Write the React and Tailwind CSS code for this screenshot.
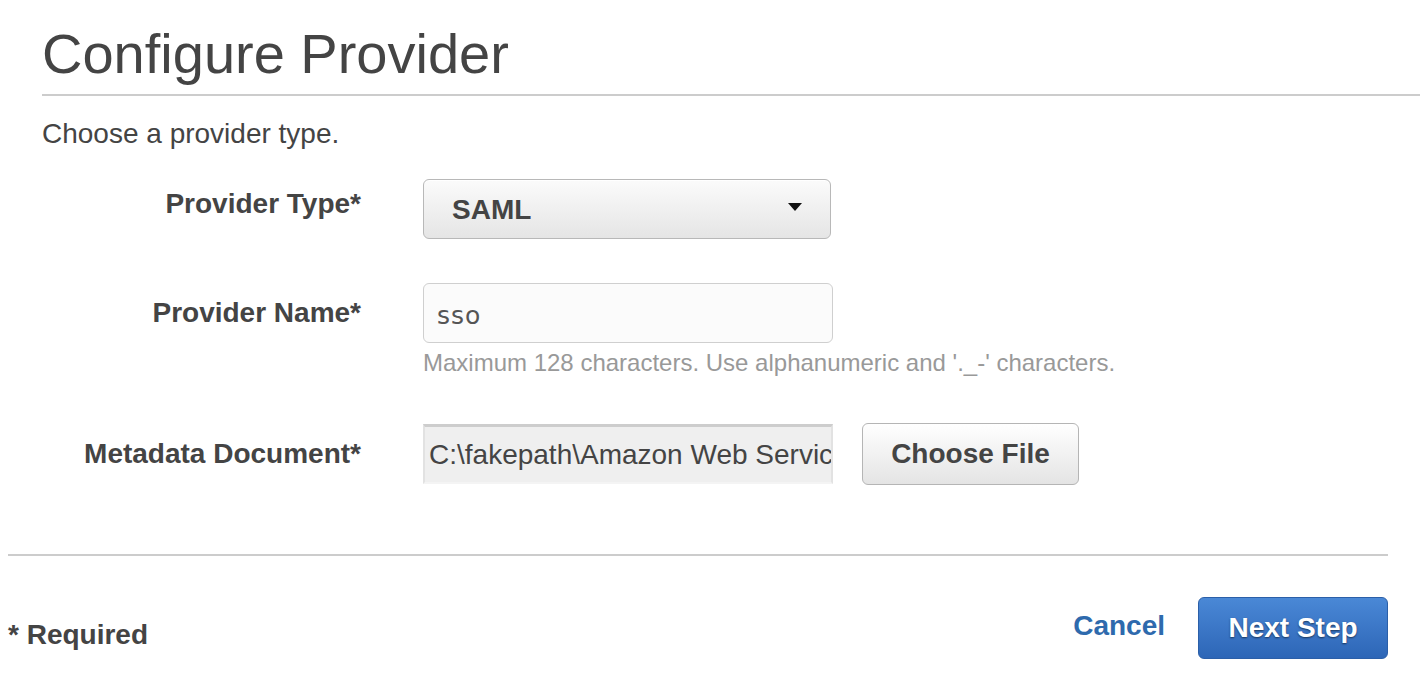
import React from "react";

const F = { fontFamily: '"Liberation Sans", Arial, Helvetica, sans-serif' };

export default function App() {
  return (
    <div className="w-[1420px] h-[684px] bg-white text-[#444] overflow-hidden" style={F}>
      <div className="pl-[42px] pt-[26px]">
        <h1 className="text-[56px] leading-[56px] font-normal text-[#444]">Configure Provider</h1>
        <div className="mt-[12px] h-[2px] bg-[#cccccc]" />
        <p className="mt-[24px] text-[28px] leading-[28px]">Choose a provider type.</p>
      </div>

      <div className="mt-[31px] flex flex-col">
        {/* Row 1 */}
        <div className="flex items-center h-[60px]">
          <div className="w-[361px] text-right text-[28px] leading-[28px] font-bold pb-[10px]">Provider Type*</div>
          <div className="ml-[62px] w-[408px] h-[60px] rounded-[6px] border border-[#b8b8b8] bg-gradient-to-b from-[#fbfbfb] to-[#e5e5e5] flex items-center justify-between pl-[28px] pr-[28px] shadow-[inset_0_1px_0_#ffffff]">
            <span className="text-[28px] font-bold leading-[28px] mt-[2px]">SAML</span>
            <svg width="14" height="8" viewBox="0 0 14 8" className="mt-[-4px]">
              <polygon points="0,0 14,0 7,8" fill="#111" />
            </svg>
          </div>
        </div>

        {/* Row 2 */}
        <div className="mt-[44px] flex items-center h-[60px]">
          <div className="w-[361px] text-right text-[28px] leading-[28px] font-bold">Provider Name*</div>
          <div className="ml-[62px] w-[410px] h-[60px] rounded-[6px] border border-[#cfcfcf] bg-[#fbfbfb] flex items-center pl-[13px]">
            <span className="text-[25px] leading-[25px] text-[#555] tracking-[1px] mt-[4px]" style={{ fontFamily: '"DejaVu Sans", Verdana, sans-serif' }}>sso</span>
          </div>
        </div>
        <div className="ml-[423px] mt-[8px] text-[24px] leading-[24px] text-[#999]">
          Maximum 128 characters. Use alphanumeric and '._-' characters.
        </div>

        {/* Row 3 */}
        <div className="mt-[48px] flex items-center h-[62px]">
          <div className="w-[361px] text-right text-[28px] leading-[28px] font-bold">Metadata Document*</div>
          <div className="ml-[62px] w-[410px] h-[60px] bg-[#efefef] border-t-[3px] border-t-[#cdcdcd] border-x-[2px] border-x-[#e2e2e2] border-b-[2px] border-b-[#f4f4f4] flex items-center pl-[4px] overflow-hidden whitespace-nowrap">
            <span className="text-[28px] leading-[28px] text-[#444]">C:\fakepath\Amazon Web Servic</span>
          </div>
          <button className="ml-[29px] w-[217px] h-[62px] rounded-[6px] border border-[#b5b5b5] bg-gradient-to-b from-[#ffffff] to-[#e4e4e4] text-[28px] font-bold text-[#444] flex items-center justify-center">
            Choose File
          </button>
        </div>
      </div>

      <div className="ml-[8px] w-[1380px] mt-[69px]">
        <div className="h-[2px] bg-[#cccccc]" />
        <div className="mt-[41px] flex items-start justify-between">
          <div className="mt-[24px] text-[28px] leading-[28px] font-bold">* Required</div>
          <div className="flex items-center">
            <a className="text-[28px] leading-[28px] font-bold text-[#2e6aad] mt-[-4px]">Cancel</a>
            <button className="ml-[33px] w-[190px] h-[62px] rounded-[6px] border border-[#2b5fa8] bg-gradient-to-b from-[#4a88d6] to-[#2d66b7] text-white text-[28px] font-bold flex items-center justify-center [text-shadow:0_1px_2px_rgba(0,0,0,0.55)]">
              Next Step
            </button>
          </div>
        </div>
      </div>
    </div>
  );
}
